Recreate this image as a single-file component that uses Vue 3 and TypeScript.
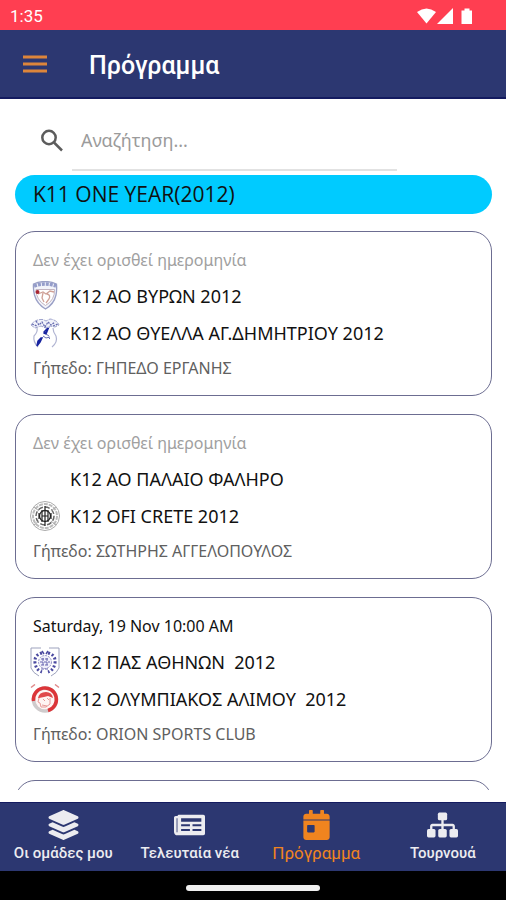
<script setup lang="ts">
import { ref } from 'vue'

type Crest = 'shield' | 'eagle' | 'rings' | 'laurel' | 'wreath'
interface Team { name: string; crest?: Crest }
interface Match { id: number; date?: string; teams: Team[]; venue: string }

const query = ref('')

const matches: Match[] = [
  {
    id: 1,
    teams: [
      { name: 'Κ12 ΑΟ ΒΥΡΩΝ 2012', crest: 'shield' },
      { name: 'Κ12 ΑΟ ΘΥΕΛΛΑ ΑΓ.ΔΗΜΗΤΡΙΟΥ 2012', crest: 'eagle' },
    ],
    venue: 'ΓΗΠΕΔΟ ΕΡΓΑΝΗΣ',
  },
  {
    id: 2,
    teams: [
      { name: 'Κ12 ΑΟ ΠΑΛΑΙΟ ΦΑΛΗΡΟ' },
      { name: 'Κ12 OFI CRETE 2012', crest: 'rings' },
    ],
    venue: 'ΣΩΤΗΡΗΣ ΑΓΓΕΛΟΠΟΥΛΟΣ',
  },
  {
    id: 3,
    date: 'Saturday, 19 Nov 10:00 AM',
    teams: [
      { name: 'Κ12 ΠΑΣ ΑΘΗΝΩΝ  2012', crest: 'laurel' },
      { name: 'Κ12 ΟΛΥΜΠΙΑΚΟΣ ΑΛΙΜΟΥ  2012', crest: 'wreath' },
    ],
    venue: 'ORION SPORTS CLUB',
  },
]

const tabs = [
  { id: 'teams', label: 'Οι ομάδες μου' },
  { id: 'news', label: 'Τελευταία νέα' },
  { id: 'schedule', label: 'Πρόγραμμα' },
  { id: 'cups', label: 'Τουρνουά' },
]
const active = ref('schedule')
</script>

<template>
  <div class="screen">
    <div class="status">
      <span>1:35</span>
      <svg class="status-icons" viewBox="0 0 58 18" aria-hidden="true">
        <path d="M0 5Q9.500-2 19 5L9.500 16.500Z" />
        <path d="M20 17 36 1V17Z" />
        <path d="M47.500 1.500h5v2h2.500v13.500h-10.500v-13.500h3Z" />
      </svg>
    </div>

    <header class="topbar">
      <button class="menu" type="button" aria-label="Menu">
        <svg viewBox="0 0 24 18" aria-hidden="true">
          <path d="M0 2h24M0 9h24M0 16h24" />
        </svg>
      </button>
      <h1>Πρόγραμμα</h1>
    </header>

    <main class="content">
      <label class="search">
        <svg viewBox="0 0 24 24" aria-hidden="true">
          <circle cx="9" cy="8.500" r="6.700" />
          <path d="M14 13.500l8 8" />
        </svg>
        <input v-model="query" type="search" placeholder="Αναζήτηση..." aria-label="Αναζήτηση" />
      </label>

      <h2 class="group">K11 ONE YEAR(2012)</h2>

      <div class="list">
        <article v-for="match in matches" :key="match.id" class="card">
          <p class="date" :class="{ pending: !match.date }">{{ match.date ?? 'Δεν έχει ορισθεί ημερομηνία' }}</p>
          <div v-for="team in match.teams" :key="team.name" class="team">
            <span class="crest">
              <svg v-if="team.crest === 'shield'" viewBox="0 0 30 30" aria-hidden="true">
                <path d="M3.500 3Q15-2 26.500 3 27 9 26 14 24 23 15.500 28 7 23 4.500 14 3 8 3.500 3Z" fill="#f3f4fa" stroke="#9aa0c6" stroke-width="1.300" />
                <path d="M4 5Q15 1 26 5" fill="none" stroke="#959dca" stroke-width="3.500" stroke-dasharray="3 1" />
                <path d="M6 8.500h18.500Q25 19 15.500 24.500 6 19 6 8.500Z" fill="#fff" stroke="#c2b5c2" />
                <path d="M8 13l5-2 3 2 4-3 4 1M13 12l-1 5 2 4M17 13q4 1 2 5l-3 4" fill="none" stroke="#cfa197" stroke-width="1.300" />
                <circle cx="7.500" cy="11" r="2" fill="#a92633" />
              </svg>
              <svg v-else-if="team.crest === 'eagle'" viewBox="0 0 30 30" aria-hidden="true">
                <path d="M1 7Q5 1 13 1.500L16 3 20 1Q27 2 29 7L25 9 20 8 16 10 11 8 5 10Z" fill="#f1f2fa" stroke="#9fa4cd" stroke-dasharray="4 1" />
                <path d="M2 6l5 2M6 3l3 4 3-3 3 5 3-5 3 3 4-3M23 8l5-2" fill="none" stroke="#666cb0" stroke-width="1.300" stroke-dasharray="2 1" />
                <path d="M7 10Q8 14 4 18 3 24 8 29M23 10Q23 14 26 18 28 24 22 29" fill="none" stroke="#b0b4d2" stroke-width="1.200" />
                <path d="M18 10l-3 3-1 3M12 20l-2 4-3 4 1-5 3-3ZM14 14l4-3-2 5Z" fill="#1824a0" stroke="#1824a0" stroke-width="1.500" />
                <path d="M13 18l3 2 4-1M16 16l3 2M18 19l2 2" fill="none" stroke="#6971b4" />
              </svg>
              <svg v-else-if="team.crest === 'rings'" viewBox="0 0 30 30" aria-hidden="true">
                <g fill="none" stroke="#222">
                  <circle cx="15" cy="15" r="14.500" stroke="#aaa" />
                  <circle cx="15" cy="15" r="12" stroke="#bbb" stroke-width="2" stroke-dasharray="4 1" />
                  <circle cx="15" cy="15" r="9" stroke="#666" stroke-width="1.500" stroke-dasharray="5 2" />
                  <circle cx="15" cy="15" r="5.500" stroke-width="1.300" />
                  <path d="M15 5v20M12 9v12M18 9v12M9 12v6M21 12v6M12 15h6" stroke-width="1.200" />
                  <path d="M4 6l5 4M26 6l-5 4M4 24l5-4M26 24l-5-4" stroke="#aaa" />
                </g>
              </svg>
              <svg v-else-if="team.crest === 'laurel'" viewBox="0 0 30 30" aria-hidden="true">
                <path d="M11 1H1v20q2 5 8 8M19 1h10v20q-2 5-8 8" fill="none" stroke="#9da2bd" />
                <path d="M12 6Q4 8 5 16q1 7 7 9M18 6q8 2 7 10-1 7-7 9" fill="none" stroke="#4b4aa0" stroke-width="3" stroke-dasharray="2 2" />
                <path d="M12 4l2 3M18 4l-2 3" stroke="#4b4aa0" stroke-width="1.500" />
                <circle cx="15" cy="15" r="6.500" fill="#f0f0fa" stroke="#9a97ca" stroke-dasharray="2 1" />
                <path d="M11 12h8M10 15h10M11 18h8M13 11v8M17 11v8M11 22h8" fill="none" stroke="#6765af" stroke-dasharray="3 1" />
              </svg>
              <svg v-else-if="team.crest === 'wreath'" viewBox="0 0 30 30" aria-hidden="true">
                <path d="M1 3.500l4-3M25 .5l4 3" stroke="#e08a8a" stroke-width="1.500" />
                <circle cx="15" cy="15.500" r="11.500" fill="#fff5f4" stroke="#cfcbcc" stroke-width="3.500" />
                <path d="M3.500 17A11.500 11.500 0 1 1 18 26.500" fill="none" stroke="#dc3539" stroke-width="3.500" />
                <path d="M8 14q1-6 8-6 6 0 7 6l-5-2-4 1-5 1Z" fill="#e0494c" />
                <path d="M9 14l-1 4 2 1 1 4h5l4-3V14M13 15l2 2M17 14l2 2M12 21l5 1" fill="none" stroke="#e69a98" />
              </svg>
            </span>
            <span class="name">{{ team.name }}</span>
          </div>
          <p class="venue">Γήπεδο: {{ match.venue }}</p>
        </article>
        <article class="card upcoming"></article>
      </div>
    </main>

    <nav class="tabs">
      <button
        v-for="tab in tabs"
        :key="tab.id"
        type="button"
        class="tab"
        :class="{ active: active === tab.id }"
        @click="active = tab.id"
      >
        <svg v-if="tab.id === 'teams'" viewBox="0 0 512 512" aria-hidden="true">
          <path d="M12 148l232 105c8 3 16 3 24 0l232-105c16-7 16-33 0-40L268 3c-8-4-16-4-24 0L12 108c-16 7-16 33 0 40Z" />
          <path d="M500 236l-58-26-161 73c-16 7-34 7-50 0L70 210l-58 26c-16 7-16 32 0 40l232 105c8 3 16 3 24 0l232-105c16-8 16-33 0-40Z" />
          <path d="M500 364l-58-26-161 73c-16 7-34 7-50 0L70 338l-58 26c-16 7-16 32 0 40l232 105c8 4 16 4 24 0l232-105c16-8 16-33 0-40Z" />
        </svg>
        <svg v-else-if="tab.id === 'news'" viewBox="0 0 576 512" aria-hidden="true">
          <path fill-rule="evenodd" d="M544 64H96c-15 0-28 10-31 23H32C14 87 0 101 0 119v265c0 35 29 64 64 64h480c18 0 32-14 32-32V96c0-18-14-32-32-32ZM48 130h16v250c0 20-16 20-16 0ZM132 132v64h376v-64ZM132 244v34h164v-34ZM344 244v34h164v-34ZM132 332v34h164v-34ZM344 332v34h164v-34Z" />
        </svg>
        <svg v-else-if="tab.id === 'schedule'" viewBox="0 0 448 512" aria-hidden="true">
          <path d="M0 160v-48c0-27 21-48 48-48h48V12c0-7 5-12 12-12h40c7 0 12 5 12 12v52h128V12c0-7 5-12 12-12h40c7 0 12 5 12 12v52h48c27 0 48 21 48 48v48Z" />
          <path fill-rule="evenodd" d="M0 180h448v284c0 27-21 48-48 48H48c-27 0-48-21-48-48ZM80 256c-9 0-16 7-16 16v96c0 9 7 16 16 16h96c9 0 16-7 16-16v-96c0-9-7-16-16-16Z" />
        </svg>
        <svg v-else viewBox="0 0 640 512" aria-hidden="true">
          <rect x="224" width="192" height="160" rx="32" />
          <path d="M296 150h48v82h184c27 0 48 21 48 48v60h-48v-60H344v60h-48v-60H112v60H64v-60c0-27 21-48 48-48h184Z" />
          <rect y="340" width="176" height="172" rx="32" />
          <rect x="232" y="340" width="176" height="172" rx="32" />
          <rect x="464" y="340" width="176" height="172" rx="32" />
        </svg>
        <span>{{ tab.label }}</span>
      </button>
    </nav>
    <div class="gesture"><span></span></div>
  </div>
</template>

<style>
body {
  margin: 0;
}
</style>

<style scoped>
.screen {
  display: flex;
  flex-direction: column;
  height: 100vh;
  background: #fff;
  color: #111;
  font-family: "Noto Sans", "Open Sans", sans-serif;
}
h1,
h2,
p {
  margin: 0;
  font-weight: 400;
}
button {
  border: 0;
  padding: 0;
  background: none;
  font: inherit;
}
.status {
  display: flex;
  align-items: center;
  justify-content: space-between;
  box-sizing: border-box;
  height: 30px;
  padding: 1px 31px 0 10px;
  background: #ff3e51;
  color: #fff;
  font: 17px/30px Roboto, sans-serif;
}
.status-icons {
  width: 58px;
  height: 18px;
  fill: #fff;
}
.topbar {
  display: flex;
  align-items: center;
  gap: 42px;
  box-sizing: border-box;
  height: 69px;
  padding: 0 23px;
  border-bottom: 2px solid #141b60;
  background: #2c3771;
}
.menu {
  width: 24px;
  height: 18px;
}
.menu svg {
  display: block;
  fill: none;
  stroke: #dd853b;
  stroke-width: 3;
}
.topbar h1 {
  padding-top: 4px;
  color: #fff;
  font: 500 25px/34px Roboto, sans-serif;
}
.content {
  display: flex;
  flex: 1;
  flex-direction: column;
  min-height: 0;
  padding: 12px 14px 12px 15px;
}
.search {
  display: flex;
  align-items: center;
  flex: none;
  height: 60px;
  margin: 0 95px 4px 25px;
}
.search svg {
  width: 24px;
  height: 24px;
  margin-right: 8px;
  fill: none;
  stroke: #5c5c5c;
  stroke-width: 2.5;
}
.search input {
  flex: 1;
  box-sizing: border-box;
  min-width: 0;
  height: 60px;
  padding: 0 9px;
  border: 0;
  border-bottom: 2px solid #e2e2e2;
  outline: 0;
  background: none;
  color: #333;
  font: 18px/24px "Noto Sans", sans-serif;
}
.search input::placeholder {
  color: #9b9b9b;
  opacity: 1;
}
.group {
  flex: none;
  padding: 0 18px;
  border-radius: 20px;
  background: #00cbff;
  font-family: "Open Sans", sans-serif;
  font-size: 21px;
  line-height: 39px;
}
.list {
  display: flex;
  flex: 1;
  flex-direction: column;
  gap: 18px;
  min-height: 0;
  margin-top: 17px;
  overflow: hidden;
}
.card {
  flex: none;
  padding: 17px 17px 16px;
  border: 1px solid #6c6d91;
  border-radius: 20px;
}
.upcoming {
  height: 131px;
}
.date {
  margin-bottom: 6px;
  font-size: 16px;
  line-height: 22px;
}
.pending {
  color: #a0a0a0;
}
.team {
  display: flex;
  align-items: center;
  height: 37px;
}
.crest {
  width: 30px;
  height: 30px;
  margin: 0 10px 0 -3px;
}
.crest svg {
  display: block;
}
.name {
  font-size: 18px;
  line-height: 26px;
  white-space: pre;
}
.venue {
  margin-top: 6px;
  color: #606060;
  font-size: 16px;
  line-height: 22px;
}
.tabs {
  display: grid;
  grid-template-columns: repeat(4, 1fr);
  box-sizing: border-box;
  height: 69px;
  border-top: 1px solid #141b60;
  background: #2c3771;
}
.tab {
  display: flex;
  flex-direction: column;
  align-items: center;
  justify-content: center;
  gap: 3px;
  padding-bottom: 2px;
  color: #ececf0;
  font: 500 15px/20px Roboto, sans-serif;
  white-space: nowrap;
}
.tab svg {
  width: 31px;
  height: 30px;
  fill: currentColor;
}
.tab.active {
  color: #f0841f;
  font-size: 17px;
  font-weight: 400;
}
.gesture {
  display: flex;
  align-items: center;
  justify-content: center;
  height: 29px;
  padding-top: 4px;
  box-sizing: border-box;
  background: #000;
}
.gesture span {
  width: 134px;
  height: 6px;
  border-radius: 3px;
  background: #efefef;
}
</style>
